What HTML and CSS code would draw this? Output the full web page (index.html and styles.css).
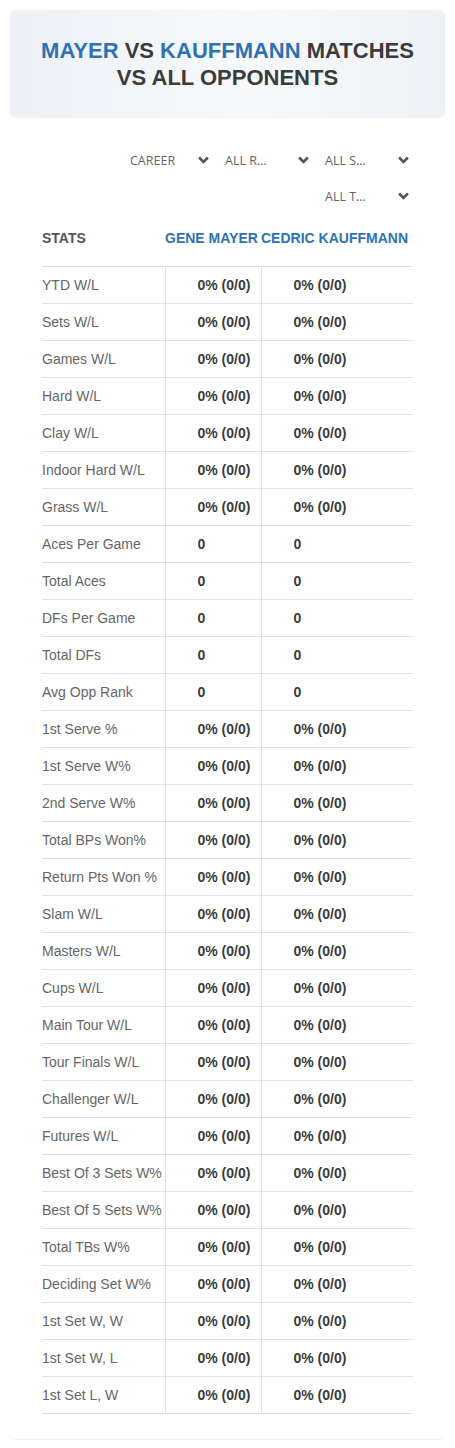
FILE: index.html
```html
<!DOCTYPE html>
<html lang="en">
<head>
    <meta charset="UTF-8">
    <meta name="viewport" content="width=device-width, initial-scale=1.0">
    <title>Mayer vs Kauffmann</title>
    <link rel="stylesheet" href="styles.css">
</head>
<body>
    <div class="page">
        <div class="title-box">
            <h1><span class="blue">MAYER</span> VS <span class="blue">KAUFFMANN</span> MATCHES VS ALL OPPONENTS</h1>
        </div>

        <div class="content">
            <div class="filters">
                <div class="filter first"><span>CAREER</span><svg viewBox="0 0 10 7"><path d="M1 1.2 5 5.2 9 1.2" /></svg></div>
                <div class="filter"><span>ALL R…</span><svg viewBox="0 0 10 7"><path d="M1 1.2 5 5.2 9 1.2" /></svg></div>
                <div class="filter"><span>ALL S…</span><svg viewBox="0 0 10 7"><path d="M1 1.2 5 5.2 9 1.2" /></svg></div>
                <div class="filter"><span>ALL T…</span><svg viewBox="0 0 10 7"><path d="M1 1.2 5 5.2 9 1.2" /></svg></div>
            </div>

            <table class="stats">
                <thead>
                    <tr>
                        <th class="label">STATS</th>
                        <th class="player">GENE MAYER</th>
                        <th class="player">CEDRIC KAUFFMANN</th>
                    </tr>
                </thead>
                <tbody id="rows"></tbody>
            </table>
        </div>
    </div>

    <script>
        const rows = [
            ['YTD W/L', '0% (0/0)'],
            ['Sets W/L', '0% (0/0)'],
            ['Games W/L', '0% (0/0)'],
            ['Hard W/L', '0% (0/0)'],
            ['Clay W/L', '0% (0/0)'],
            ['Indoor Hard W/L', '0% (0/0)'],
            ['Grass W/L', '0% (0/0)'],
            ['Aces Per Game', '0'],
            ['Total Aces', '0'],
            ['DFs Per Game', '0'],
            ['Total DFs', '0'],
            ['Avg Opp Rank', '0'],
            ['1st Serve %', '0% (0/0)'],
            ['1st Serve W%', '0% (0/0)'],
            ['2nd Serve W%', '0% (0/0)'],
            ['Total BPs Won%', '0% (0/0)'],
            ['Return Pts Won %', '0% (0/0)'],
            ['Slam W/L', '0% (0/0)'],
            ['Masters W/L', '0% (0/0)'],
            ['Cups W/L', '0% (0/0)'],
            ['Main Tour W/L', '0% (0/0)'],
            ['Tour Finals W/L', '0% (0/0)'],
            ['Challenger W/L', '0% (0/0)'],
            ['Futures W/L', '0% (0/0)'],
            ['Best Of 3 Sets W%', '0% (0/0)'],
            ['Best Of 5 Sets W%', '0% (0/0)'],
            ['Total TBs W%', '0% (0/0)'],
            ['Deciding Set W%', '0% (0/0)'],
            ['1st Set W, W', '0% (0/0)'],
            ['1st Set W, L', '0% (0/0)'],
            ['1st Set L, W', '0% (0/0)']
        ];

        // Build the table rows
        const body = document.getElementById('rows');
        rows.forEach(function (row) {
            const tr = document.createElement('tr');
            tr.innerHTML = '<td class="label">' + row[0] + '</td>' +
                '<td class="value">' + row[1] + '</td>' +
                '<td class="value">' + row[1] + '</td>';
            body.appendChild(tr);
        });
    </script>
</body>
</html>
```

FILE: styles.css
```css
body {
    font-family: "Liberation Sans", Arial, sans-serif;
    background-color: #fff;
    margin: 0;
    padding: 10px;
}
.page {
    border-radius: 6px;
    box-shadow: 0 1px 1px rgba(0, 0, 0, 0.05);
}
.title-box {
    height: 107px;
    box-sizing: border-box;
    display: flex;
    align-items: center;
    justify-content: center;
    background: linear-gradient(90deg, #edf1f6 0%, #f7f9fb 55%, #eef2f6 100%);
    border-radius: 6px;
    box-shadow: 0 1px 2px rgba(0, 0, 0, 0.05);
    padding: 0 28px;
}
.title-box h1 {
    margin: 0;
    font-size: 22px;
    line-height: 27px;
    font-weight: bold;
    text-align: center;
    color: #3b3b3b;
}
.blue {
    color: #2e72b5;
}
.content {
    padding: 25px 32px 25px 32px;
}
.filters {
    display: flex;
    flex-wrap: wrap;
    justify-content: flex-end;
    margin-left: 71px;
}
.filter {
    width: 100px;
    height: 36px;
    box-sizing: border-box;
    padding: 0 4px 0 12px;
    display: flex;
    align-items: center;
    justify-content: space-between;
    font-family: "Open Sans", sans-serif;
    font-size: 12.5px;
    color: #666;
}
.filter.first {
    padding-left: 17px;
}
.filter svg {
    width: 11px;
    height: 8px;
    fill: none;
    stroke: #555;
    stroke-width: 2.4;
}
.stats {
    width: 100%;
    border-collapse: collapse;
    table-layout: fixed;
}
.stats th {
    height: 48px;
    padding: 0 0 4px 0;
    text-align: left;
    font-size: 14px;
    font-weight: bold;
    white-space: nowrap;
}
.stats th.label {
    width: 123px;
    color: #555;
}
.stats th.player {
    color: #2e72b5;
}
.stats th:nth-child(2) {
    width: 96px;
}
.stats td {
    height: 36px;
    padding: 0;
    font-size: 14px;
    border-top: 1px solid #e2e2e2;
    border-bottom: 1px solid #e2e2e2;
}
.stats td.label {
    color: #666;
}
.stats td.value {
    padding-left: 32px;
    font-weight: bold;
    color: #3b3b3b;
    border-left: 1px solid #e2e2e2;
}
```
